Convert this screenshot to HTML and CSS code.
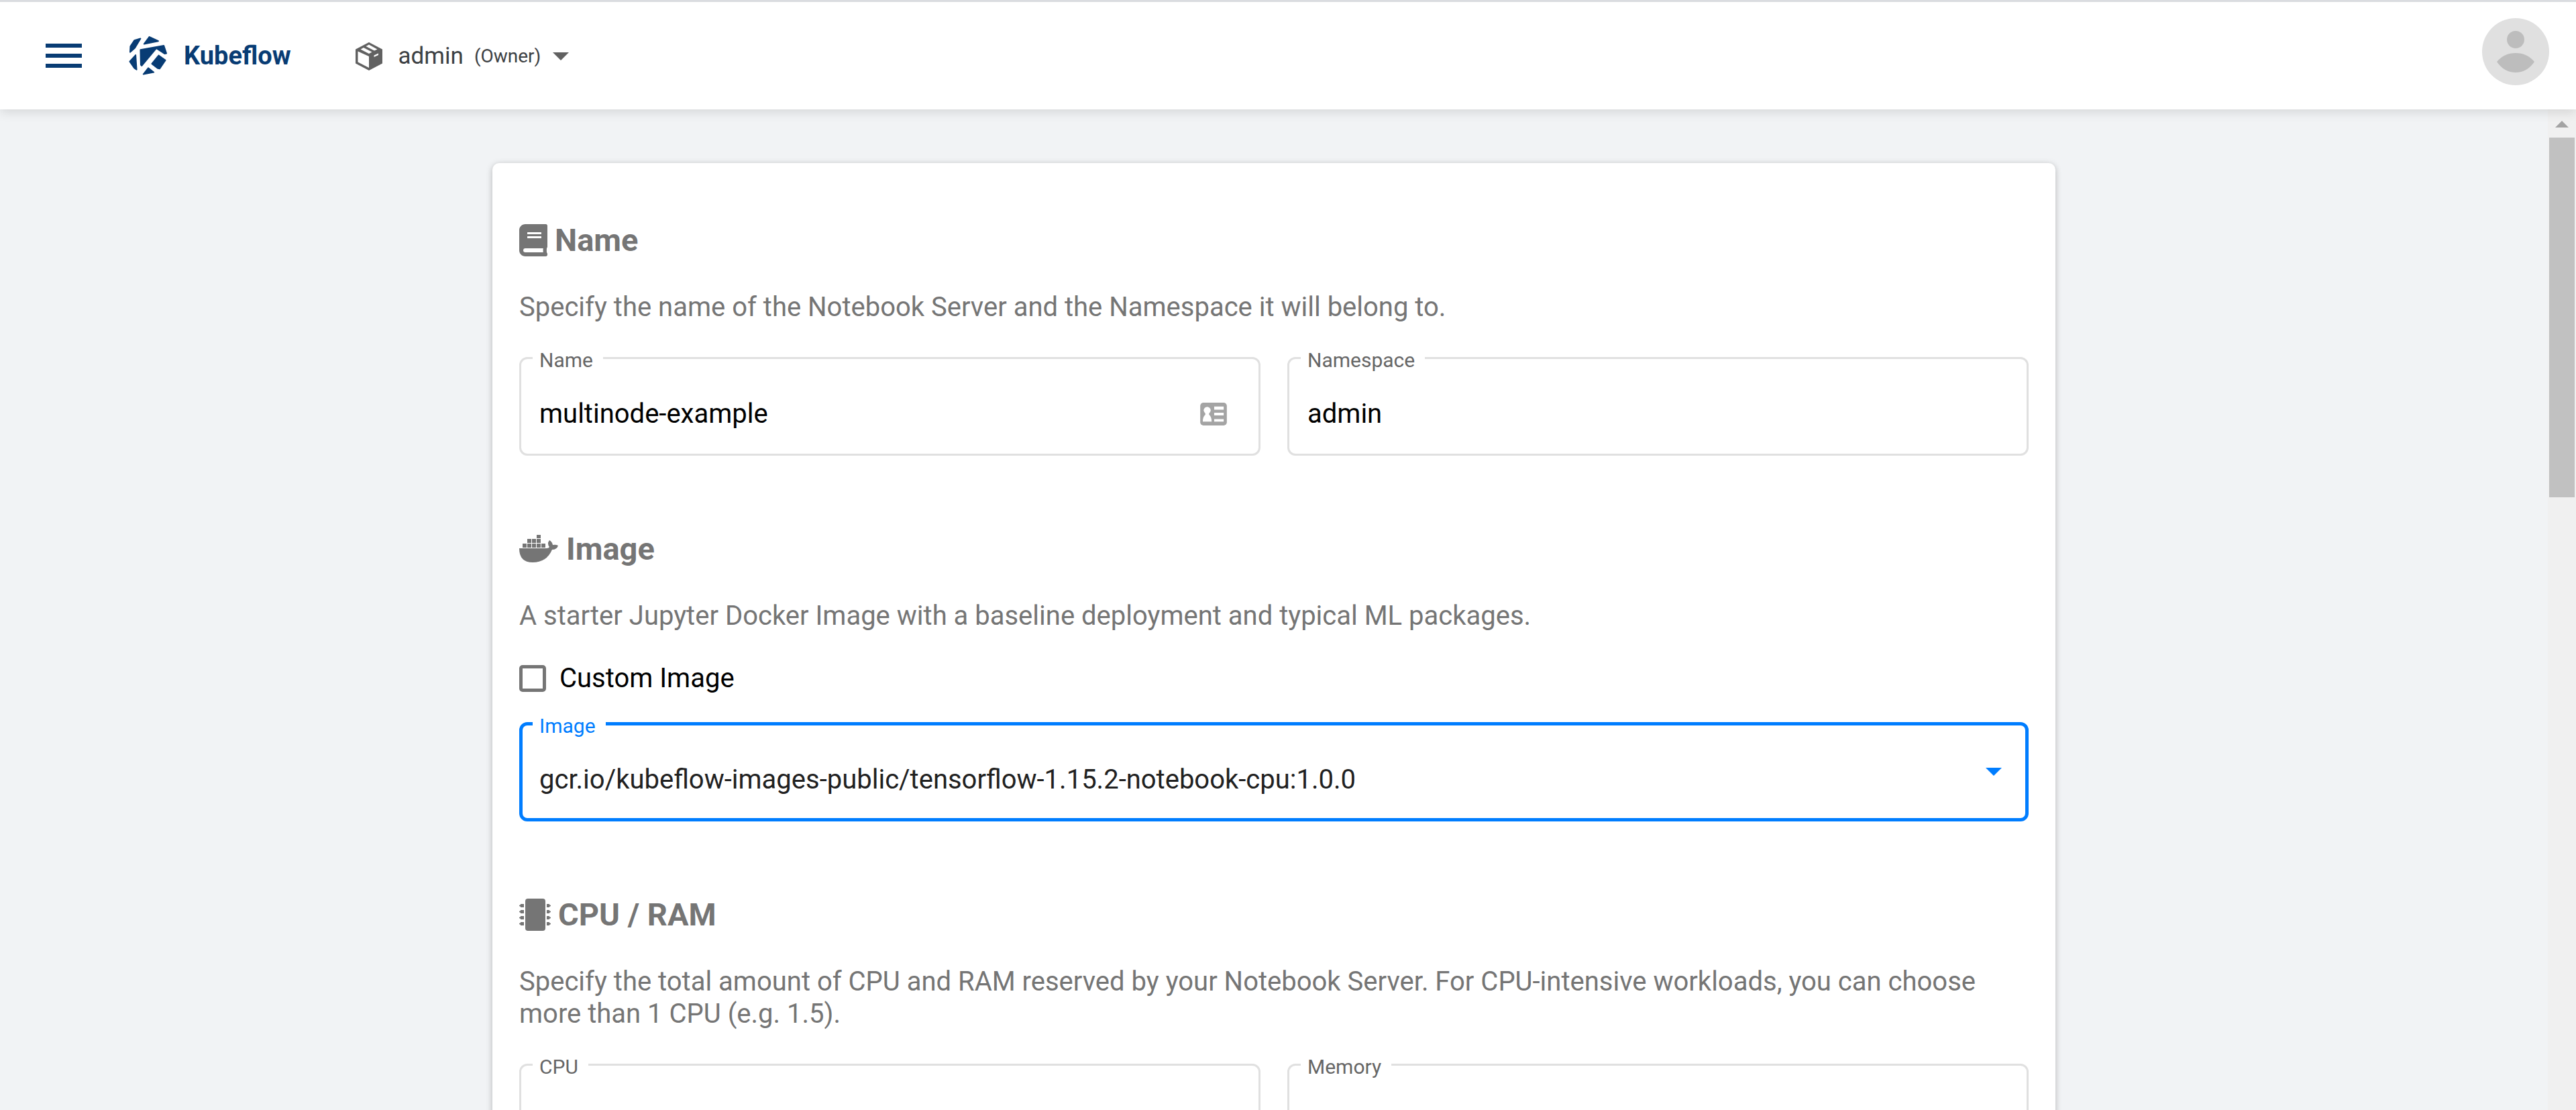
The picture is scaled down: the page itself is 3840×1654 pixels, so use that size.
FILE: index.html
```html
<!DOCTYPE html>
<html lang="en">
<head>
<meta charset="utf-8">
<title>Kubeflow</title>
<link rel="stylesheet" href="styles.css">
</head>
<body>
<header class="topbar">
  <button class="menu" aria-label="Toggle menu">
    <svg width="54" height="38" viewBox="0 0 54 38"><path d="M0 4h54M0 19h54M0 34h54" stroke="#083c74" stroke-width="6"/></svg>
  </button>
  <a class="brand" href="#">
    <svg class="logo" viewBox="0 0 60 61" fill="#083c74" stroke="#083c74" stroke-width="2" stroke-linejoin="round"><path d="M18 4L9 19 2 25 2.500 16 8.500 7zM31.500 1.500L45.500 8 23.500 12.500zM18 21.500L54 15 58 27 55.500 27.500 42.500 19 20 46 18.500 44.500zM10.500 29.500L12 52 8.500 49.500 1.500 39.500zM46 30L56.500 37.500 47.500 50.500 44.500 50 35.500 43zM30 49.500L38.500 56 22.500 59z"/></svg>
    <span>Kubeflow</span>
  </a>
  <button class="owner">
    <svg class="cube" viewBox="0 0 40 42"><path fill="#616161" d="M20 0L40 10.500V31.500L20 42 0 31.500V10.500z"/><path fill="#fff" d="M3.500 13.500L20 21V38L3.500 29.500zM7.500 10.500L12 8 24.500 14.500 20 17zM15.500 6L20 3.500 32.500 10.500 28 12.500zM27.500 19.500L34 16.500V19L27.500 22z"/></svg>
    <span>admin</span>
    <small>(Owner)</small>
    <span class="caret"></span>
  </button>
  <a class="avatar" href="#" aria-label="Account">
    <svg viewBox="0 0 100 100"><circle cx="50" cy="50" r="50" fill="#e0e0e0"/><circle cx="50" cy="32" r="13" fill="#bdbdbd"/><path d="M22 65Q33 52 50 52T78 65Q67 81 50 81T22 65z" fill="#bdbdbd"/></svg>
  </a>
</header>
<div class="view">
  <main class="page">
    <form class="card">
      <section class="section">
        <h3><svg width="42" height="48" viewBox="0 0 448 512"><path fill="currentColor" d="M448 360V24c0-13-11-24-24-24H96C43 0 0 43 0 96v320c0 53 43 96 96 96h328c13 0 24-11 24-24v-16c0-8-3-14-9-19-4-15-4-59 0-74 6-4 9-11 9-19zM128 134c0-3 3-6 6-6h212c3 0 6 3 6 6v20c0 3-3 6-6 6H134c-3 0-6-3-6-6v-20zm0 64c0-3 3-6 6-6h212c3 0 6 3 6 6v20c0 3-3 6-6 6H134c-3 0-6-3-6-6v-20zm253 250H96c-18 0-32-14-32-32s14-32 32-32h285c-2 17-2 47 0 64z"/></svg>Name</h3>
        <p>Specify the name of the Notebook Server and the Namespace it will belong to.</p>
        <div class="row">
          <fieldset class="field">
            <legend><label for="name">Name</label></legend>
            <div class="control">
              <input id="name" type="text" value="multinode-example">
              <svg class="contact" width="40" height="34" viewBox="0 0 42 36"><rect width="42" height="36" rx="5" fill="#a4a4a4"/><g fill="#fff"><circle cx="11" cy="12" r="5.500"/><path d="M8 15h6v4q4 3 4 11H4q0-8 4-11zM22 6h15v5H22zM22 16h15v4H22zM22 26h15v4H22z"/></g></svg>
            </div>
          </fieldset>
          <fieldset class="field">
            <legend><label for="namespace">Namespace</label></legend>
            <div class="control"><input id="namespace" type="text" value="admin"></div>
          </fieldset>
        </div>
      </section>
      <section class="section">
        <h3><svg class="docker" width="58" height="42" viewBox="0 0 58 42"><path fill="currentColor" d="M26 0h6v5h-6zM12 6h6v6h-6zM19 6h6v6h-6zM26 6h6v6h-6zM5 13h6v6H5zM12 13h6v6h-6zM19 13h6v6h-6zM26 13h6v6h-6zM33 13h6v6h-6zM0 20h41q3 0 4-2-4-5 0-10 4 2 5 7 5-1 8 1-2 6-9 6-8 19-29 19Q0 41 0 20z"/></svg>Image</h3>
        <p>A starter Jupyter Docker Image with a baseline deployment and typical ML packages.</p>
        <label class="check"><input type="checkbox">Custom Image</label>
        <fieldset class="field active">
          <legend><label for="image">Image</label></legend>
          <div class="control">
            <select id="image"><option>gcr.io/kubeflow-images-public/tensorflow-1.15.2-notebook-cpu:1.0.0</option></select>
            <span class="arrow"></span>
          </div>
        </fieldset>
      </section>
      <section class="section">
        <h3><svg width="47" height="48" viewBox="0 0 47 48"><g fill="currentColor"><rect x="9" width="30" height="48" rx="4"/><path d="M0 10l2-1V8h5v5H2v-1l-2-1zM0 19l2-1v-1h5v5H2v-1l-2-1zM0 28l2-1v-1h5v5H2v-1l-2-1zM0 37l2-1v-1h5v5H2v-1l-2-1zM47 10l-2-1V8h-4v5h4v-1l2-1zM47 19l-2-1v-1h-4v5h4v-1l2-1zM47 28l-2-1v-1h-4v5h4v-1l2-1zM47 37l-2-1v-1h-4v5h4v-1l2-1z"/></g></svg>CPU / RAM</h3>
        <p>Specify the total amount of CPU and RAM reserved by your Notebook Server. For CPU-intensive workloads, you can choose more than 1 CPU (e.g. 1.5).</p>
        <div class="row">
          <fieldset class="field">
            <legend><label for="cpu">CPU</label></legend>
            <div class="control"><input id="cpu" type="text"></div>
          </fieldset>
          <fieldset class="field">
            <legend><label for="memory">Memory</label></legend>
            <div class="control"><input id="memory" type="text"></div>
          </fieldset>
        </div>
      </section>
    </form>
  </main>
  <div class="scrollbar"><span class="up"></span><span class="thumb"></span></div>
</div>
</body>
</html>
```

FILE: styles.css
```css
* { box-sizing: border-box; }
body {
  margin: 0;
  height: 100vh;
  overflow: hidden;
  display: flex;
  flex-direction: column;
  font: 40px/48px Roboto, sans-serif;
  color: #000;
  background: #f1f3f5;
}
button, input, select { font: inherit; color: inherit; background: none; border: 0; padding: 0; margin: 0; }
a { color: inherit; text-decoration: none; }
svg { display: block; flex: none; }

.topbar {
  flex: none;
  display: flex;
  align-items: center;
  height: 163px;
  padding: 0 40px 0 68px;
  border-top: 3px solid #dadce0;
  background: #fff;
  box-shadow: 0 4px 16px rgba(0, 0, 0, .12);
  z-index: 1;
}
.brand {
  display: flex;
  align-items: center;
  gap: 24px;
  margin: 0 96px 0 70px;
  font-size: 38px;
  font-weight: 700;
  color: #083c74;
}
.logo { width: 58px; height: 60px; }
.owner { display: flex; align-items: center; padding-top: 2px; font-size: 35px; color: #3c4043; }
.cube { width: 40px; height: 42px; margin-right: 24px; }
.owner small { margin: 0 18px 0 16px; font-size: 28px; }
.caret { border: 12px solid transparent; border-top-color: #616161; border-bottom: 0; }
.avatar { width: 100px; margin: 0 0 12px auto; }

.view { flex: 1; min-height: 0; display: flex; }
.page { flex: 1; padding: 80px 0 0; overflow: hidden; }
.card {
  width: 2330px;
  max-width: 100%;
  margin: 0 auto;
  padding: 40px 40px 80px;
  border-radius: 10px;
  background: #fff;
  box-shadow: 0 2px 10px rgba(0, 0, 0, .26);
}
.section { padding: 50px 0 64px; color: #757575; }
.section h3 {
  display: flex;
  align-items: center;
  gap: 11px;
  margin: 0;
  font-size: 47px;
  line-height: 50px;
  font-weight: 700;
}
.docker { margin-right: 1px; }
.section p { margin: 51px 0 30px; }
.row { display: grid; grid-template-columns: 1fr 1fr; gap: 40px; }
.field {
  min-width: 0;
  height: 167px;
  margin: 0;
  padding: 0 27px;
  border: 3px solid #e0e0e0;
  border-radius: 12px;
  color: #000;
}
.field legend {
  margin-left: -10px;
  padding: 8px 15px 0 10px;
  font-size: 30px;
  line-height: 34px;
  color: #666;
}
.control { display: flex; align-items: center; padding-top: 39px; }
.control input, .control select { flex: 1; min-width: 0; height: 48px; outline: 0; }
.control select { appearance: none; color: #212121; }
.contact { margin-right: 20px; }
.check { display: flex; align-items: center; gap: 20px; height: 48px; margin: 45px 0 22px; color: #000; }
.check input { appearance: none; width: 40px; height: 40px; border: 5px solid #757575; border-radius: 5px; }
.active { border: 5px solid #007dff; color: #212121; padding: 0 25px; }
.active legend { color: #007dff; }
.arrow { margin: 0 10px 24px 0; border: 12px solid transparent; border-top-color: #007dff; border-bottom: 0; }

.scrollbar {
  width: 42px;
  display: flex;
  flex-direction: column;
  align-items: center;
  background: #f0f0f0;
}
.up { margin: 17px 0 15px; border: 10px solid transparent; border-bottom-color: #a3a3a3; border-top: 0; }
.thumb { width: 38px; height: 536px; background: #c1c1c1; }
```
